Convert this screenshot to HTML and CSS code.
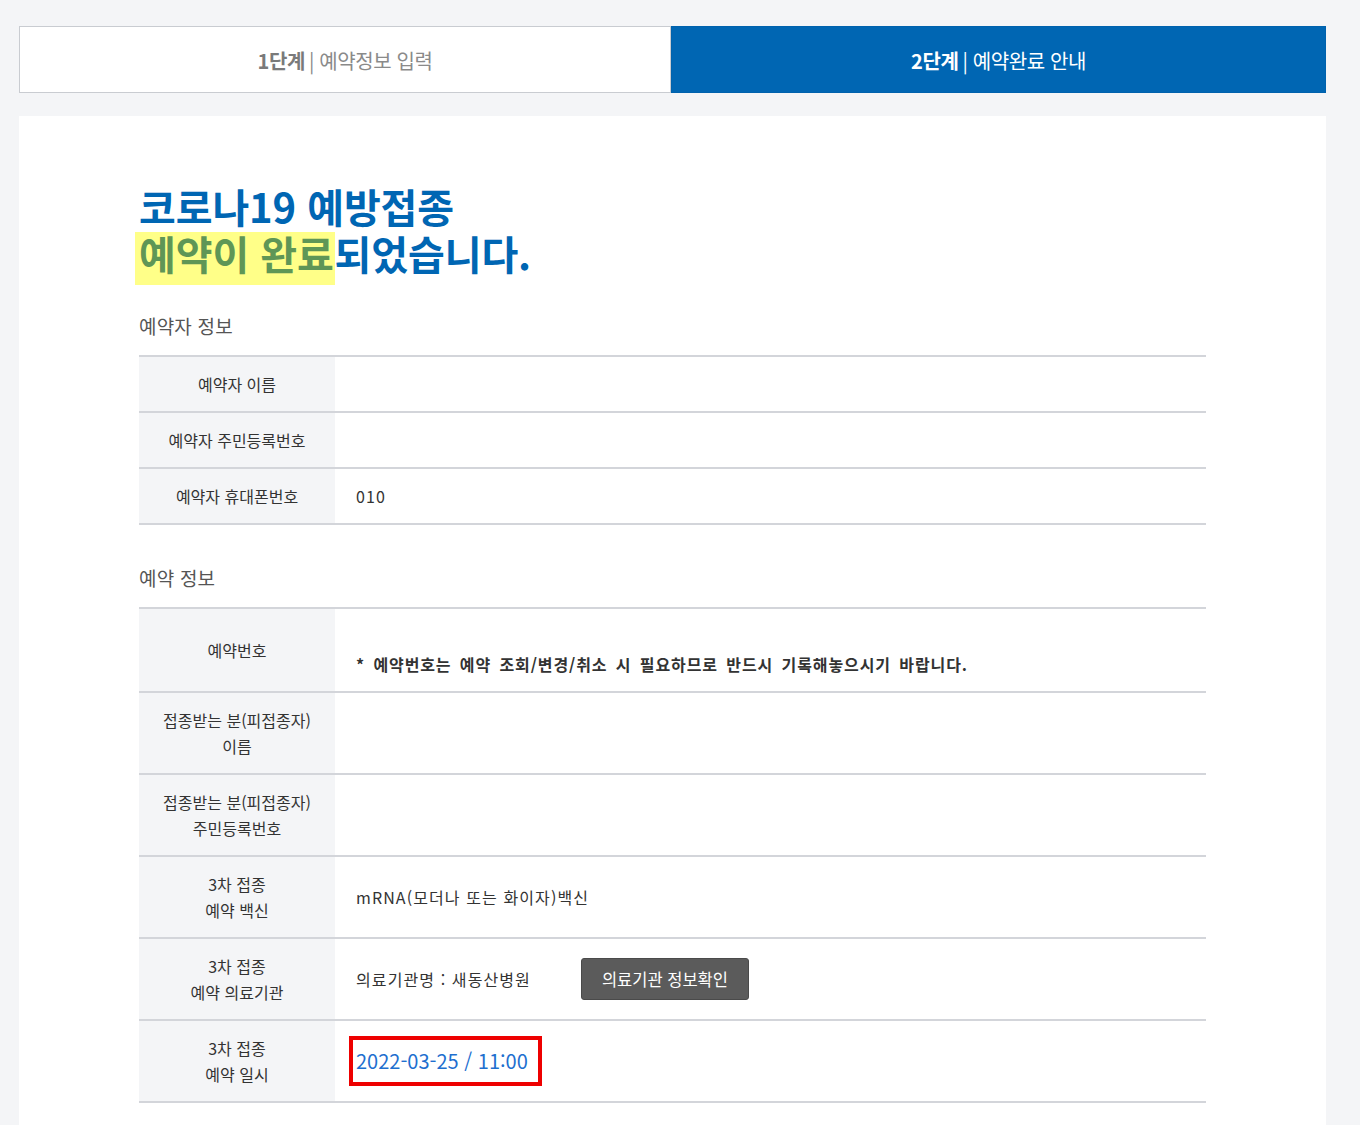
FILE: index.html
```html
<!DOCTYPE html>
<html lang="ko">
<head>
<meta charset="utf-8">
<link rel="stylesheet" href="styles.css">
</head>
<body>
<div class="page">
  <div class="steps">
    <div class="step"><b>1단계</b> | 예약정보 입력</div>
    <div class="step active"><b>2단계</b> | 예약완료 안내</div>
  </div>
  <div class="card">
    <h1 class="title">코로나19 예방접종<br><span class="hl">예약이 완료</span>되었습니다.</h1>

    <h2 class="sec">예약자 정보</h2>
    <div class="tbl">
      <div class="row"><div class="lab">예약자 이름</div><div class="val"></div></div>
      <div class="row"><div class="lab">예약자 주민등록번호</div><div class="val"></div></div>
      <div class="row"><div class="lab">예약자 휴대폰번호</div><div class="val">010</div></div>
    </div>

    <h2 class="sec sec2">예약 정보</h2>
    <div class="tbl">
      <div class="row"><div class="lab">예약번호</div><div class="val"><div class="blank">&nbsp;</div><div class="note">* 예약번호는 예약 조회/변경/취소 시 필요하므로 반드시 기록해놓으시기 바랍니다.</div></div></div>
      <div class="row"><div class="lab">접종받는 분(피접종자)<br>이름</div><div class="val"></div></div>
      <div class="row"><div class="lab">접종받는 분(피접종자)<br>주민등록번호</div><div class="val"></div></div>
      <div class="row"><div class="lab">3차 접종<br>예약 백신</div><div class="val">mRNA(모더나 또는 화이자)백신</div></div>
      <div class="row"><div class="lab">3차 접종<br>예약 의료기관</div><div class="val hosp"><span>의료기관명 : 새동산병원</span><button class="btn">의료기관 정보확인</button></div></div>
      <div class="row"><div class="lab">3차 접종<br>예약 일시</div><div class="val"><span class="date">2022-03-25 / 11:00</span></div></div>
    </div>
  </div>
</div>
</body>
</html>
```

FILE: styles.css
```css
* { box-sizing: border-box; }
html, body { margin: 0; padding: 0; }
body {
  background: #f4f5f7;
  font-family: "Noto Sans CJK KR", "Noto Sans", sans-serif;
  color: #333;
  height: 1125px;
  overflow: hidden;
}
.page { padding: 26px 34px 0 19px; }
.steps { display: flex; height: 67px; }
.step {
  flex: 0 0 652px;
  display: flex; align-items: center; justify-content: center;
  background: #fff;
  border: 1px solid #c9ccd1;
  color: #8a8a8a;
  font-size: 20px;
  letter-spacing: -0.4px;
  padding-top: 2px;
}
.step b { color: #7a7a7a; margin-right: 4px; font-weight: 700; }
.step.active {
  flex: 0 0 655px;
  background: #0066b3;
  border-color: #0062ad;
  color: #fff;
}
.step.active b { color: #fff; }
.card {
  margin-top: 23px;
  background: #fff;
  width: 1307px;
  padding: 67px 120px 40px 120px;
  min-height: 1100px;
}
.title {
  margin: 0;
  font-size: 40px;
  line-height: 47px;
  font-weight: 700;
  color: #0066b3;
  letter-spacing: -0.1px;
}
.hl {
  background: linear-gradient(#ffff88, #ffff88) no-repeat left bottom / 100% 53px;
  color: #5f9656;
  margin-left: -4px;
  padding: 0 1px 3px 4px;
}
.sec {
  margin: 37px 0 17px;
  font-size: 19px;
  line-height: 24px;
  font-weight: 400;
  color: #555;
  letter-spacing: 0.2px;
}
.sec2 { margin-top: 41px; }
.tbl { border-top: 2px solid #d3d5da; }
.row { display: flex; border-bottom: 2px solid #d3d5da; }
.lab {
  flex: 0 0 196px;
  background: #f4f5f7;
  text-align: center;
  padding: 14px 0;
  font-size: 16px;
  line-height: 26px;
  color: #333;
  letter-spacing: 0;
  display: flex; align-items: center; justify-content: center;
}
.val {
  flex: 1;
  padding: 14px 21px;
  font-size: 16px;
  line-height: 26px;
  color: #333;
  letter-spacing: 1.1px;
  display: flex; flex-direction: column; justify-content: center;
}
.note { font-weight: 700; margin-top: 2px; letter-spacing: 0.9px; word-spacing: 3px; }
.hosp { flex-direction: row; align-items: center; justify-content: flex-start; }
.btn {
  margin-left: 50px;
  height: 42px;
  width: 168px;
  border: 1px solid #4a4a4a;
  border-radius: 3px;
  background: #5b5b5b;
  color: #fff;
  font-family: inherit;
  font-size: 16.5px;
  letter-spacing: 0;
}
.date {
  align-self: flex-start;
  border: 4px solid #ee0000;
  margin-left: -7px;
  padding: 8px 10px 8px 3px;
  font-size: 20px;
  line-height: 26px;
  letter-spacing: 0;
  color: #1e6fcf;
}
```
